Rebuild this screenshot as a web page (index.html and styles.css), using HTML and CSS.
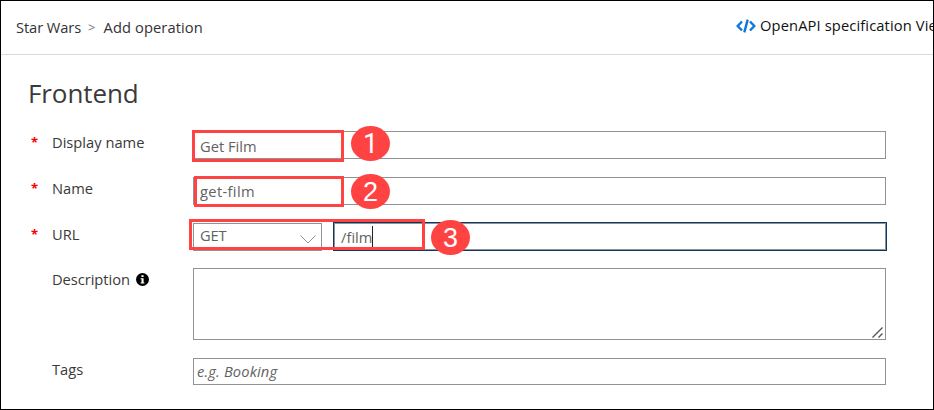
FILE: index.html
```html
<!DOCTYPE html>
<html lang="en">
<head>
<meta charset="utf-8">
<title>Add operation</title>
<link rel="stylesheet" href="styles.css">
</head>
<body>
<div class="page">
  <header class="topbar">
    <nav class="breadcrumb"><span class="crumb-api">Star Wars</span><span class="separator">&gt;</span><span class="crumb-page">Add operation</span></nav>
    <div class="spec-link">
      <svg class="code-icon" viewBox="0 0 20 14" width="20" height="14"><path d="M6 2.500 1.700 7 6 11.500M14 2.500 18.300 7 14 11.500M11.700.6 8.300 13.400" fill="none" stroke="#0f78d6" stroke-width="2.400"/></svg>
      <span class="spec-text">OpenAPI specification Vie</span>
    </div>
  </header>
  <main class="content">
    <h1 class="heading"><span>Frontend</span></h1>
    <div class="row">
      <span class="required">*</span><span class="label label-display">Display name</span>
      <div class="field value-display">Get Film</div>
      <div class="mark mark-display"></div><div class="step step-display">1</div>
    </div>
    <div class="row">
      <span class="required">*</span><span class="label label-name">Name</span>
      <div class="field value-name">get-film</div>
      <div class="mark mark-name"></div><div class="step step-name">2</div>
    </div>
    <div class="row row-url">
      <span class="required">*</span><span class="label label-url">URL</span>
      <div class="url-group">
        <div class="field select"><span>GET</span>
          <svg class="chevron" viewBox="0 0 16 9" width="16" height="9"><path d="M.5.5 8 8 15.500.5" fill="none" stroke="#929292"/></svg>
        </div>
        <div class="field url-input"><span class="url-text">/film</span><i class="caret"></i></div>
      </div>
      <div class="mark mark-url"></div><div class="step step-url">3</div>
    </div>
    <div class="row row-description">
      <span></span><span class="label label-description"><span>Description</span>
        <svg class="info-icon" viewBox="0 0 13 13" width="13" height="13"><circle cx="6.500" cy="6.500" r="6.500" fill="#000"/><path d="M5.400 2.300h2.200v1.800H5.400zM4.600 5.200h3v4.300h.8v1H4.600v-1h.9V6.200h-.9z" fill="#fff"/></svg>
      </span>
      <div class="field textarea"><svg class="resize" viewBox="0 0 11 11" width="11" height="11"><path d="M.5 10.500 10.500.5M6.500 10.500l4-4" fill="none" stroke="#555" stroke-width="1.400"/></svg></div>
    </div>
    <div class="row">
      <span></span><span class="label label-tags">Tags</span>
      <div class="field tags"><span>e.g. Booking</span></div>
    </div>
  </main>
</div>
</body>
</html>
```
FILE: styles.css
```css
* { box-sizing: border-box; }
body { margin: 0; font: 14.7px/18px "Open Sans", "Noto Sans", sans-serif; color: #3a3a3a; background: #fff; }
.page { width: 934px; height: 410px; border: 1px solid #000; overflow: hidden; }
.topbar { display: flex; justify-content: space-between; height: 54px; border-bottom: 1px solid #dadada; white-space: nowrap; }
.breadcrumb { display: flex; padding: 17px 0 0 15px; color: #333; }
.crumb-api { width: 72px; letter-spacing: -.1px; }
.separator { width: 15.500px; font-size: 13px; color: #777; }
.crumb-page { letter-spacing: .1px; }
.spec-link { display: flex; width: 197px; padding-top: 15px; color: #111; }
.code-icon { flex: none; margin: 3px 4px 0 0; }
.spec-text { letter-spacing: .12px; }
.content { padding: 21px 47px 0 27px; }
.heading { margin: 0 0 18px; font-size: 26px; font-weight: 400; line-height: 34px; letter-spacing: -.1px; height: 37px; }
.row { position: relative; display: grid; grid-template-columns: 24px 141px 693px; height: 46px; align-items: start; }
.required { padding: 2px 0 0 3px; color: #f80000; font-weight: 700; font-size: 13px; }
.label { padding-top: 2px; white-space: nowrap; }
.field { height: 28px; border: 1px solid #929292; padding: 5px 6px 0; color: #626262; white-space: nowrap; }
.value-name { padding-top: 4px; letter-spacing: .35px; }
.row-url { height: 45px; }
.url-group { display: grid; grid-template-columns: 129px 552px; gap: 12px; }
.select { display: flex; justify-content: space-between; padding-top: 2px; padding-right: 5px; }
.select span { letter-spacing: -.2px; }
.chevron { margin-top: 9px; }
.url-input { display: flex; outline: 1px solid #0b3767; height: 27px; padding: 4px 6px 0; }
.url-text { width: 31px; }
.caret { width: 1px; height: 21px; margin-top: -2px; background: #222; }
.row-description { height: 90px; }
.label-description { display: flex; gap: 6px; letter-spacing: -.05px; }
.info-icon { margin-top: 3px; }
.textarea { display: flex; height: 72px; align-items: flex-end; justify-content: flex-end; padding: 0 2px 1px; }
.tags { height: 27px; padding: 3px 3px 0; font-style: italic; letter-spacing: .15px; }
.mark { position: absolute; border: 3px solid #ff4343; }
.mark-display { left: 164px; top: -1px; width: 152px; height: 32px; }
.mark-name { left: 166px; top: -1px; width: 150px; height: 31px; }
.mark-url { left: 161px; top: -4px; width: 236px; height: 31px; }
.step { position: absolute; width: 39px; height: 35px; border-radius: 50%; background: #ff4343; color: #fff; font: 27px/36px "Liberation Sans", sans-serif; text-align: center; }
.step-display { left: 323px; top: -5px; font-family: Roboto, sans-serif; }
.step-name { left: 323px; top: -3px; }
.step-url { left: 403px; top: -3px; }
```
